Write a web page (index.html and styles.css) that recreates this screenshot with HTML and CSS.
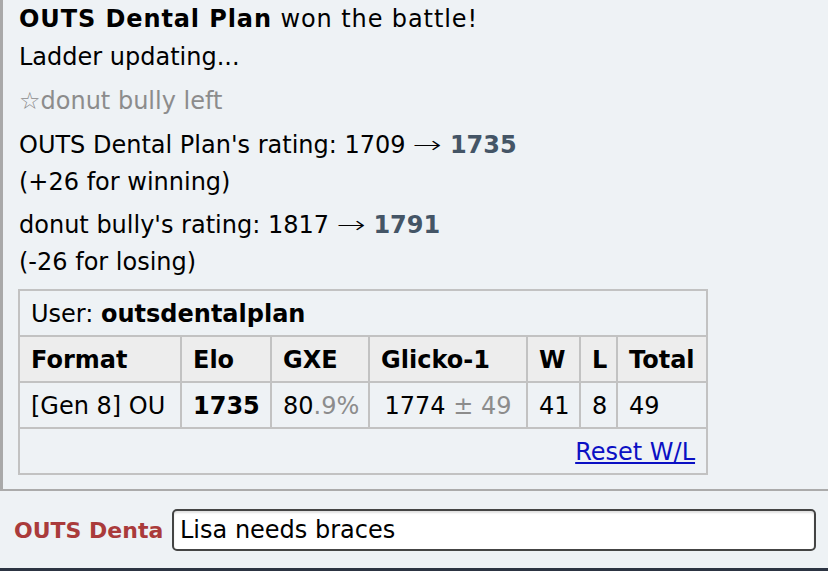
FILE: index.html
```html
<!DOCTYPE html>
<html>
<head>
<meta charset="utf-8">
<link rel="stylesheet" href="styles.css">
</head>
<body>
<div class="page">
  <div class="log">
    <div class="line wide"><strong>OUTS Dental Plan</strong> won the battle!</div>
    <div class="line">Ladder updating...</div>
    <div class="line muted gap1">☆donut bully left</div>
    <div class="para gap2">OUTS Dental Plan's rating: 1709 <span class="arrow">→</span> <strong class="score">1735</strong><br>(+26 for winning)</div>
    <div class="para gap3">donut bully's rating: 1817 <span class="arrow">→</span> <strong class="score">1791</strong><br>(-26 for losing)</div>
    <table class="ladder">
      <colgroup>
        <col class="c-format"><col class="c-elo"><col class="c-gxe"><col class="c-glicko"><col class="c-w"><col class="c-l"><col class="c-total">
      </colgroup>
      <tr><td colspan="7">User: <strong>outsdentalplan</strong></td></tr>
      <tr class="head"><th>Format</th><th>Elo</th><th>GXE</th><th>Glicko-1</th><th>W</th><th>L</th><th>Total</th></tr>
      <tr><td>[Gen 8] OU</td><td><strong>1735</strong></td><td>80<span class="muted">.9%</span></td><td class="center">1774<span class="muted"> ± 49</span></td><td>41</td><td>8</td><td>49</td></tr>
      <tr><td colspan="7" class="right"><a href="#" class="link">Reset W/L</a></td></tr>
    </table>
  </div>
  <div class="chatbar">
    <span class="label">OUTS Denta</span>
    <div class="input">Lisa needs braces</div>
  </div>
</div>
</body>
</html>
```
FILE: styles.css
```css
html, body {
  margin: 0;
  padding: 0;
}
body {
  background: #eef2f5;
  font-family: "DejaVu Sans", Verdana, sans-serif;
  font-size: 24px;
  color: #000;
}
.page {
  height: 571px;
  display: flex;
  flex-direction: column;
  overflow: hidden;
}
.log {
  flex: 1;
  border-left: 3px solid #a9a9a9;
  padding-left: 16px;
  overflow: hidden;
}
.line {
  line-height: 38px;
}
.wide {
  letter-spacing: 0.9px;
}
.para {
  line-height: 37px;
}
.arrow {
  display: inline-block;
  font-weight: 200;
  transform: scaleX(1.45);
  margin: 0 5px 0 4px;
}
.gap1 { margin-top: 6px; }
.gap2 { margin-top: 7px; }
.gap3 { margin-top: 6px; }
.muted { color: #8c8c8c; }
.score { color: #445566; }
.ladder {
  margin-top: 8px;
  margin-left: -1px;
  border-collapse: collapse;
  table-layout: fixed;
  width: 688px;
}
.ladder td, .ladder th {
  border: 2px solid #c2c2c2;
  padding: 3px 0 0 11px;
  text-align: left;
  line-height: 41px;
  white-space: nowrap;
  overflow: hidden;
}
.ladder .head th {
  background: #ededed;
  font-weight: bold;
}
.c-format { width: 162px; }
.c-elo { width: 90px; }
.c-gxe { width: 98px; }
.c-glicko { width: 158px; }
.c-w { width: 53px; }
.c-l { width: 37px; }
.c-total { width: 90px; }
.ladder td.center { text-align: center; padding: 3px 0 0 0; }
.ladder td.right { text-align: right; padding: 3px 11px 0 0; }
.link { color: #0b10c4; text-decoration: underline; }
.chatbar {
  height: 76px;
  border-top: 2px solid #ababab;
  border-bottom: 3px solid #2c3442;
  display: flex;
  align-items: center;
  padding-left: 14px;
  padding-top: 1px;
}
.label {
  color: #aa3b3b;
  font-weight: bold;
  font-size: 22px;
  width: 158px;
  white-space: nowrap;
  overflow: hidden;
  flex: none;
}
.input {
  width: 634px;
  height: 38px;
  border: 2px solid #444;
  border-radius: 5px;
  background: #fff;
  padding-left: 6px;
  line-height: 38px;
  font-size: 24px;
  box-shadow: inset 0 2px 2px rgba(0,0,0,0.12);
}
```
